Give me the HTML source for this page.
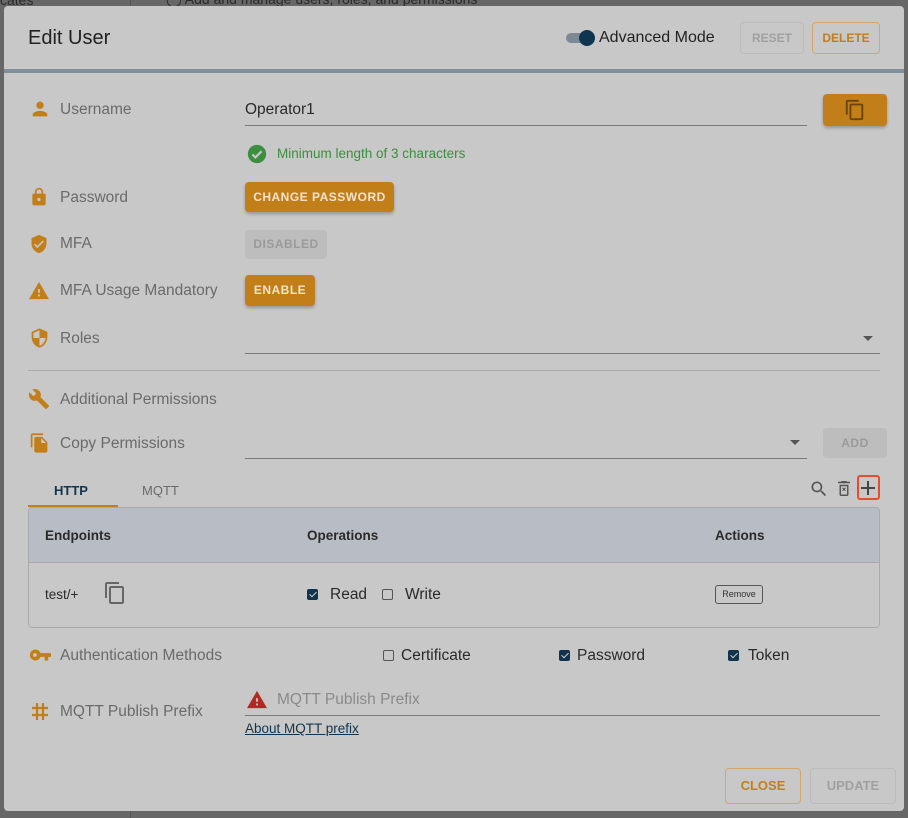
<!DOCTYPE html>
<html><head><meta charset="utf-8"><style>
*{box-sizing:border-box;margin:0;padding:0}
body{width:908px;height:818px;background:#676767;font-family:"Liberation Sans",Roboto,sans-serif;position:relative;overflow:hidden}
.a{position:absolute}
#dlg{left:4px;top:6px;width:900px;height:805px;background:#c8c8c8;border-radius:4px}
.lab{position:absolute;left:60px;font-size:15.5px;color:#6a6a6a;line-height:18px}
.ic{position:absolute;left:30px}
.btn{position:absolute;border-radius:4px;font-size:12px;font-weight:bold;letter-spacing:.5px;text-align:center;color:#f1e3cf;background:#c27f19;box-shadow:0 2px 3px rgba(0,0,0,.25)}
.ul{position:absolute;height:1px;background:#7a7a7a}
.cb{position:absolute;width:11px;height:11px;border:1.5px solid #555;border-radius:2px;background:transparent}
.cb.on{background:#12334d;border-color:#12334d}
.cb.on::after{content:"";position:absolute;left:2.5px;top:0px;width:3px;height:6px;border:solid #ccc;border-width:0 1.5px 1.5px 0;transform:rotate(45deg)}
.t{position:absolute;font-size:15.5px;color:#2a2a2a;line-height:18px}
</style></head><body>
<div class="a" style="left:0;top:-8px;font-size:14px;color:#2a2a2a">cates</div>
<div class="a" style="left:130px;top:0;width:1px;height:6px;background:#555"></div>
<div class="a" style="left:166px;top:-9px;font-size:14px;color:#2a2a2a">◯ Add and manage users, roles, and permissions</div>
<div class="a" style="left:130px;top:811px;width:1px;height:7px;background:#555"></div>
<div id="dlg" class="a"></div>
<div class="a" style="left:28px;top:27px;font-size:20px;color:#222">Edit User</div>
<div class="a" style="left:566px;top:33px;width:24px;height:10px;border-radius:5px;background:#7c8894"></div>
<div class="a" style="left:579px;top:30px;width:16px;height:16px;border-radius:8px;background:#0f3550"></div>
<div class="a" style="left:599px;top:29px;font-size:16px;color:#222">Advanced Mode</div>
<div class="a" style="left:740px;top:22px;width:64px;height:32px;border:1px solid #bbb;border-radius:4px;font-size:12px;color:#a0a0a0;text-align:center;line-height:30px;font-weight:bold">RESET</div>
<div class="a" style="left:812px;top:22px;width:68px;height:32px;border:1px solid #d3a76a;border-radius:4px;font-size:12px;color:#c27f19;text-align:center;line-height:30px;font-weight:bold">DELETE</div>
<div class="a" style="left:4px;top:69px;width:900px;height:4px;background:#80909a"></div>

<svg class="ic" style="left:29px;top:98px" width="22" height="22" viewBox="0 0 24 24"><path fill="#c27f19" d="M12 12a4 4 0 1 0 0-8 4 4 0 0 0 0 8zm0 2c-3 0-8 1.5-8 4v2h16v-2c0-2.5-5-4-8-4z"/></svg>
<div class="lab" style="top:101px">Username</div>
<div class="t" style="left:245px;top:101px">Operator1</div>
<div class="ul" style="left:245px;top:125px;width:562px"></div>
<div class="btn" style="left:823px;top:94px;width:64px;height:32px"><svg style="margin-top:5px" width="22" height="22" viewBox="0 0 24 24"><path fill="#6a440c" d="M16 1H4c-1.1 0-2 .9-2 2v14h2V3h12V1zm3 4H8c-1.1 0-2 .9-2 2v14c0 1.1.9 2 2 2h11c1.1 0 2-.9 2-2V7c0-1.1-.9-2-2-2zm0 16H8V7h11v14z"/></svg></div>

<svg class="a" style="left:246px;top:143px" width="22" height="22" viewBox="0 0 24 24"><circle cx="12" cy="12" r="10" fill="#3b8f3e"/><path d="M7 12.5l3.2 3.2L17 9" stroke="#c8c8c8" stroke-width="2.4" fill="none"/></svg>
<div class="a" style="left:277px;top:146px;font-size:13.5px;color:#3b8f3e">Minimum length of 3 characters</div>

<svg class="ic" style="left:29px;top:186px" width="20" height="22" viewBox="0 0 24 24"><path fill="#c27f19" d="M18 8h-1V6A5 5 0 0 0 7 6v2H6a2 2 0 0 0-2 2v10a2 2 0 0 0 2 2h12a2 2 0 0 0 2-2V10a2 2 0 0 0-2-2zM9 6a3 3 0 0 1 6 0v2H9V6zm3 11a2 2 0 1 1 0-4 2 2 0 0 1 0 4z"/></svg>
<div class="lab" style="top:189px">Password</div>
<div class="btn" style="left:245px;top:182px;width:149px;height:30px;line-height:30px">CHANGE PASSWORD</div>

<svg class="ic" style="left:29px;top:233px" width="20" height="22" viewBox="0 0 24 24"><path fill="#c27f19" d="M12 1L3 5v6c0 5.5 3.8 10.7 9 12 5.2-1.3 9-6.5 9-12V5l-9-4zm-2 16l-4-4 1.4-1.4L10 14.2l6.6-6.6L18 9l-8 8z"/></svg>
<div class="lab" style="top:235px">MFA</div>
<div class="btn" style="left:245px;top:230px;width:82px;height:29px;line-height:29px;background:#bdbdbd;color:#9a9a9a;box-shadow:none">DISABLED</div>

<svg class="ic" style="left:28px;top:280px" width="22" height="20" viewBox="0 0 24 22"><path fill="#c27f19" d="M1 21h22L12 2 1 21zm12-3h-2v-2h2v2zm0-4h-2v-4h2v4z"/></svg>
<div class="lab" style="top:282px">MFA Usage Mandatory</div>
<div class="btn" style="left:245px;top:275px;width:70px;height:31px;line-height:30px">ENABLE</div>

<svg class="ic" style="left:29px;top:327px" width="21" height="22" viewBox="0 0 24 24"><path fill="#c27f19" d="M12 1L3 5v6c0 5.5 3.8 10.7 9 12 5.2-1.3 9-6.5 9-12V5l-9-4zm0 11h7c-.5 4.1-3.3 7.8-7 8.9V12H5V6.3l7-3.1V12z"/></svg>
<div class="lab" style="top:330px">Roles</div>
<div class="ul" style="left:245px;top:353px;width:635px"></div>
<div class="a" style="left:863px;top:336px;width:0;height:0;border-left:5px solid transparent;border-right:5px solid transparent;border-top:5px solid #555"></div>
<div class="a" style="left:28px;top:370px;width:852px;height:1px;background:#aaa"></div>

<svg class="ic" style="left:28px;top:388px" width="22" height="22" viewBox="0 0 24 24"><path fill="#c27f19" d="M22.7 19l-9.1-9.1c.9-2.3.4-5-1.5-6.9-2-2-5-2.4-7.4-1.3L9 6 6 9 1.6 4.7C.4 7.1.9 10.1 2.9 12.1c1.9 1.9 4.6 2.4 6.9 1.5l9.1 9.1c.4.4 1 .4 1.4 0l2.3-2.3c.5-.4.5-1.1.1-1.4z"/></svg>
<div class="lab" style="top:391px">Additional Permissions</div>

<svg class="ic" style="left:29px;top:431px" width="21" height="24" viewBox="0 0 24 24"><path fill="#c27f19" d="M16 1H4c-1.1 0-2 .9-2 2v14h2V3h12V1zm-1 4l6 6v10c0 1.1-.9 2-2 2H8c-1.1 0-2-.9-2-2V7c0-1.1.9-2 2-2h7zm-1 7h5.5L14 6.5V12z"/></svg>
<div class="lab" style="top:435px">Copy Permissions</div>
<div class="ul" style="left:245px;top:458px;width:562px"></div>
<div class="a" style="left:790px;top:440px;width:0;height:0;border-left:5px solid transparent;border-right:5px solid transparent;border-top:5px solid #555"></div>
<div class="btn" style="left:823px;top:428px;width:64px;height:30px;line-height:30px;background:#bdbdbd;color:#9a9a9a;box-shadow:none">ADD</div>

<div class="a" style="left:54px;top:483px;font-size:13px;font-weight:bold;color:#12334d">HTTP</div>
<div class="a" style="left:142px;top:483px;font-size:13px;color:#6a6a6a">MQTT</div>
<div class="a" style="left:28px;top:505px;width:90px;height:2px;background:#c27f19"></div>
<svg class="a" style="left:809px;top:479px" width="20" height="20" viewBox="0 0 24 24"><path fill="#555" d="M15.5 14h-.8l-.3-.3A6.5 6.5 0 1 0 9.5 16c1.6 0 3.1-.6 4.2-1.6l.3.3v.8l5 5 1.5-1.5-5-5zm-6 0a4.5 4.5 0 1 1 0-9 4.5 4.5 0 0 1 0 9z"/></svg>
<svg class="a" style="left:835px;top:478px" width="18" height="21" viewBox="0 0 24 24"><path fill="#555" d="M15 2H9L8 3H4v2h16V3h-4l-1-1zM6 7v13c0 1.1.9 2 2 2h8c1.1 0 2-.9 2-2V7H6zm2 2h8v11H8V9zm1.5 2.5L11 13l-1.5 1.5 1 1L12 14l1.5 1.5 1-1L13 13l1.5-1.5-1-1L12 12l-1.5-1.5z"/></svg>
<div class="a" style="left:857px;top:475px;width:23px;height:25px;border:2px solid #e0502e;border-radius:3px"></div>
<div class="a" style="left:861px;top:487px;width:14px;height:1.6px;background:#444"></div>
<div class="a" style="left:867.2px;top:481px;width:1.6px;height:14px;background:#444"></div>

<div class="a" style="left:28px;top:507px;width:852px;height:121px;border:1px solid #aaa;border-radius:4px;overflow:hidden">
<div style="height:55px;background:#b8bcc4;border-bottom:1px solid #a8a8a8"></div></div>
<div class="a" style="left:45px;top:528px;font-size:13.5px;font-weight:bold;color:#2a2a2a">Endpoints</div>
<div class="a" style="left:307px;top:528px;font-size:13.5px;font-weight:bold;color:#2a2a2a">Operations</div>
<div class="a" style="left:715px;top:528px;font-size:13.5px;font-weight:bold;color:#2a2a2a">Actions</div>
<div class="a" style="left:45px;top:587px;font-size:13.5px;color:#2a2a2a">test/+</div>
<svg class="a" style="left:103px;top:581px" width="24" height="24" viewBox="0 0 24 24"><path fill="#666" d="M16 1H4c-1.1 0-2 .9-2 2v14h2V3h12V1zm3 4H8c-1.1 0-2 .9-2 2v14c0 1.1.9 2 2 2h11c1.1 0 2-.9 2-2V7c0-1.1-.9-2-2-2zm0 16H8V7h11v14z"/></svg>
<div class="cb on" style="left:307px;top:589px"></div>
<div class="t" style="left:330px;top:586px">Read</div>
<div class="cb" style="left:382px;top:589px"></div>
<div class="t" style="left:405px;top:586px">Write</div>
<div class="a" style="left:715px;top:585px;width:48px;height:19px;border:1px solid #555;border-radius:3px;font-size:9px;color:#333;text-align:center;line-height:17px">Remove</div>

<svg class="ic" style="left:29px;top:648px" width="22" height="14" viewBox="0 0 24 14"><path fill="#c27f19" d="M12.6 5A6 6 0 1 0 12.6 9H17v4h4V9h3V5H12.6zM6.5 9a2 2 0 1 1 0-4 2 2 0 0 1 0 4z"/></svg>
<div class="lab" style="top:647px">Authentication Methods</div>
<div class="cb" style="left:383px;top:650px"></div>
<div class="t" style="left:401px;top:647px">Certificate</div>
<div class="cb on" style="left:559px;top:650px"></div>
<div class="t" style="left:577px;top:647px">Password</div>
<div class="cb on" style="left:728px;top:650px"></div>
<div class="t" style="left:748px;top:647px">Token</div>

<svg class="ic" style="left:31px;top:702px" width="18" height="19" viewBox="0 0 18 19"><path d="M6 1v17M12 1v17M1 6h16M1 13h16" stroke="#c27f19" stroke-width="2.2" fill="none"/></svg>
<div class="lab" style="top:703px">MQTT Publish Prefix</div>
<svg class="a" style="left:246px;top:689px" width="22" height="20" viewBox="0 0 24 22"><path fill="#b02a22" d="M1 21h22L12 2 1 21zm12-3h-2v-2h2v2zm0-4h-2v-4h2v4z"/></svg>
<div class="a" style="left:277px;top:691px;font-size:15.5px;color:#8a8a8a">MQTT Publish Prefix</div>
<div class="ul" style="left:245px;top:715px;width:635px"></div>
<div class="a" style="left:245px;top:721px;font-size:13.5px;color:#12334d;text-decoration:underline">About MQTT prefix</div>

<div class="a" style="left:725px;top:768px;width:76px;height:36px;border:1px solid #d3a76a;border-radius:4px;font-size:13px;font-weight:bold;color:#c27f19;text-align:center;line-height:34px">CLOSE</div>
<div class="a" style="left:810px;top:768px;width:86px;height:36px;border:1px solid #bbb;border-radius:4px;font-size:13px;font-weight:bold;color:#a0a0a0;text-align:center;line-height:34px">UPDATE</div>
</body></html>
